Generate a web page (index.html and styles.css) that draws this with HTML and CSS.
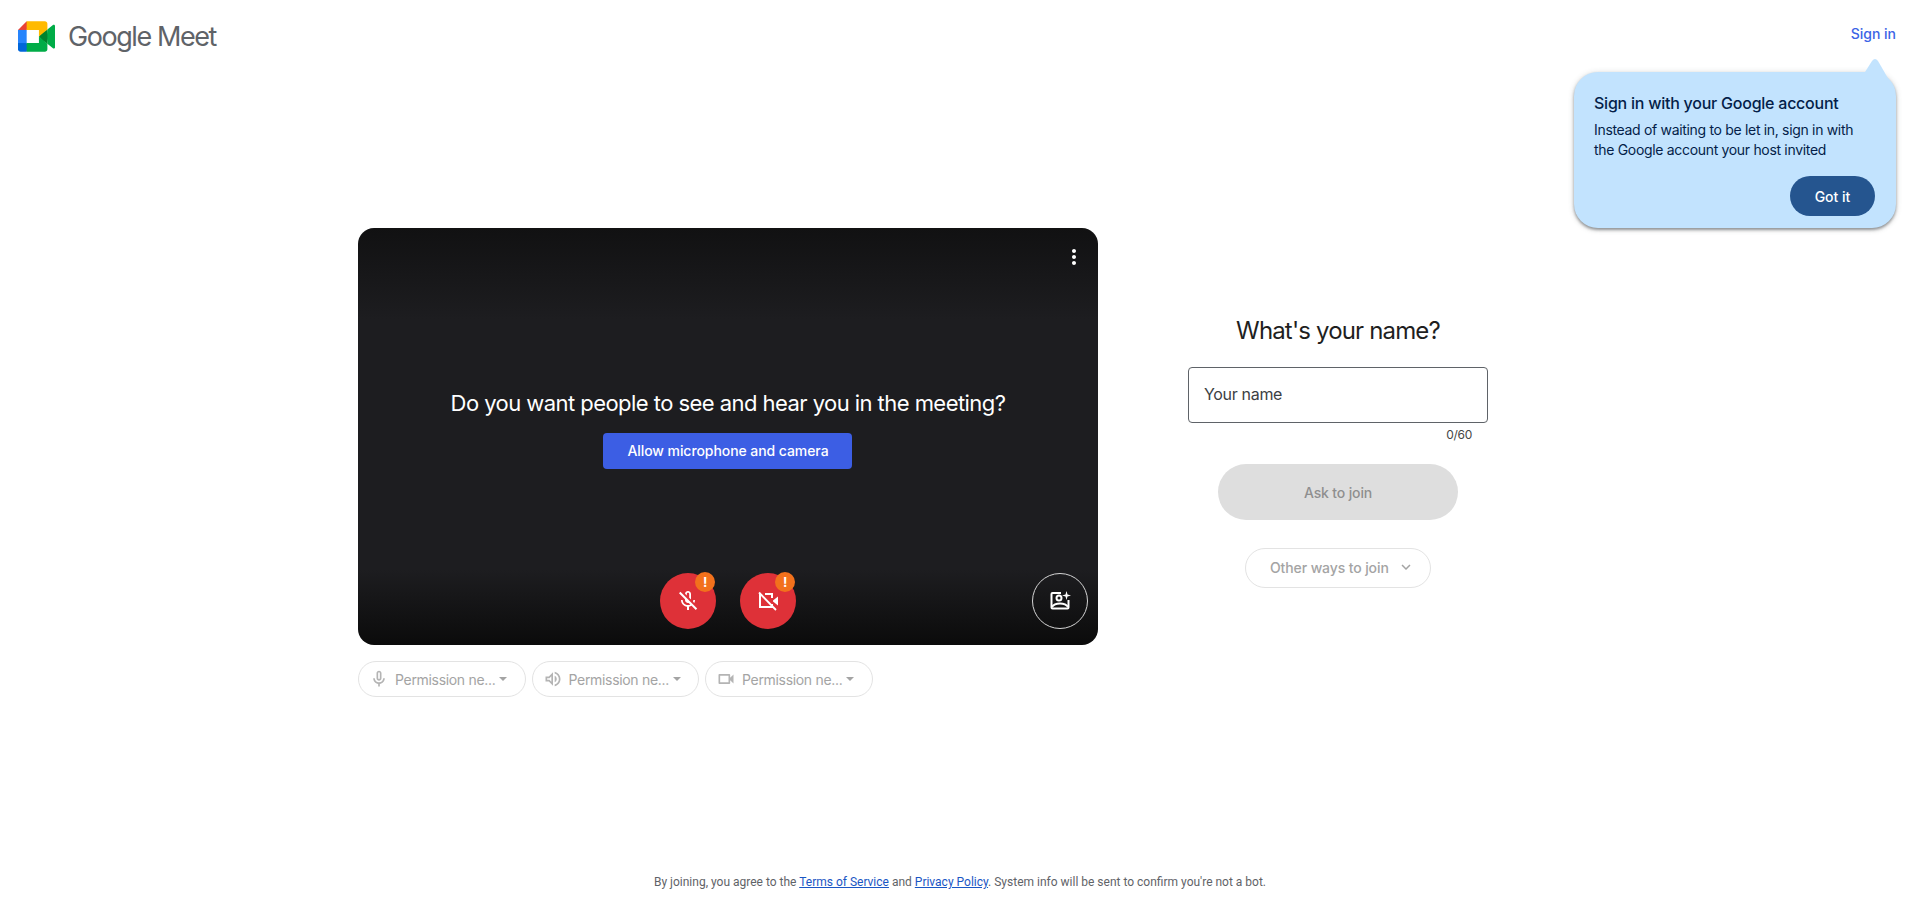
FILE: index.html
```html
<!DOCTYPE html>
<html lang="en">
<head>
    <meta charset="UTF-8">
    <meta name="viewport" content="width=device-width, initial-scale=1.0">
    <title>Google Meet</title>
    <link rel="stylesheet" href="styles.css">
</head>
<body>

    <header class="topbar">
        <div class="brand">
            <svg class="brand-logo" viewBox="0 0 87.5 72">
                <path fill="#00832d" d="M49.5 36l8.53 9.75 11.47 7.33 2-17.02-2-16.64-11.69 6.44z"/>
                <path fill="#0066da" d="M0 51.5V66c0 3.315 2.685 6 6 6h14.5l3-10.96-3-9.54-9.95-3z"/>
                <path fill="#e94235" d="M20.5 0L0 20.5l10.55 3 9.95-3 2.95-9.41z"/>
                <path fill="#2684fc" d="M20.5 20.5H0v31h20.5z"/>
                <path fill="#00ac47" d="M82.6 8.68L69.5 19.42v33.66l13.16 10.79c1.97 1.54 4.85.135 4.85-2.37V11c0-2.535-2.945-3.925-4.91-2.32zM49.5 36v15.5h-29V72h43c3.315 0 6-2.685 6-6V53.08z"/>
                <path fill="#ffba00" d="M63.5 0h-43v20.5h29V36l20-16.57V6c0-3.315-2.685-6-6-6z"/>
            </svg>
            <span class="brand-name">Google Meet</span>
        </div>
        <a class="signin-link" href="#">Sign in</a>
    </header>

    <!-- callout under the sign in link -->
    <div class="callout">
        <h2 class="callout-title">Sign in with your Google account</h2>
        <p class="callout-text">Instead of waiting to be let in, sign in with the Google account your host invited</p>
        <div class="callout-actions">
            <button class="callout-btn">Got it</button>
        </div>
    </div>

    <main class="content">
        <section class="preview-col">
            <div class="preview">
                <button class="more-btn" aria-label="More options">
                    <svg viewBox="0 0 24 24" width="24" height="24"><path fill="#fff" d="M12 8c1.1 0 2-.9 2-2s-.9-2-2-2-2 .9-2 2 .9 2 2 2zm0 2c-1.1 0-2 .9-2 2s.9 2 2 2 2-.9 2-2-.9-2-2-2zm0 6c-1.1 0-2 .9-2 2s.9 2 2 2 2-.9 2-2-.9-2-2-2z"/></svg>
                </button>

                <div class="prompt">
                    <p class="prompt-text">Do you want people to see and hear you in the meeting?</p>
                    <button class="prompt-btn">Allow microphone and camera</button>
                </div>

                <div class="controls">
                    <button class="round-btn" aria-label="Microphone">
                        <svg viewBox="0 0 24 24" width="24" height="24"><path fill="#fff" d="M10.8 4.9c0-.66.54-1.2 1.2-1.2s1.2.54 1.2 1.2l-.01 3.91L15 10.6V5c0-1.66-1.34-3-3-3-1.54 0-2.79 1.16-2.96 2.65l1.76 1.76V4.9zM19 11h-1.7c0 .58-.1 1.13-.27 1.64l1.27 1.27c.44-.88.7-1.87.7-2.91zM4.41 2.86L3 4.27l6 6V11c0 1.66 1.34 3 3 3 .23 0 .44-.03.65-.08l1.66 1.66c-.71.33-1.5.52-2.31.52-2.76 0-5.3-2.1-5.3-5.1H5c0 3.41 2.72 6.23 6 6.72V21h2v-3.28c.91-.13 1.77-.45 2.55-.9l4.2 4.2 1.41-1.41L4.41 2.86z"/></svg>
                        <span class="warn-badge">!</span>
                    </button>
                    <button class="round-btn" aria-label="Camera">
                        <svg viewBox="0 0 24 24" width="24" height="24" fill="none" stroke="#fff" stroke-width="2">
                            <path d="M9 5h7v4M16 15v3H4V5h1"/>
                            <path d="M3 3.500l17 17.500" stroke-width="1.800"/>
                            <path fill="#fff" stroke="none" d="M17 11.500l5-4v9l-5-4z"/>
                        </svg>
                        <span class="warn-badge">!</span>
                    </button>
                </div>

                <button class="effects-btn" aria-label="Apply visual effects">
                    <svg viewBox="0 0 24 24" width="24" height="24" fill="none" stroke="#fff" stroke-width="2">
                        <path d="M13 4H4.500a1 1 0 0 0-1 1v13.500a1 1 0 0 0 1 1h15a1 1 0 0 0 1-1V11"/>
                        <circle cx="11" cy="9" r="2.500"/>
                        <path d="M4 18c1.500-2.500 4.500-3.500 8-3.500s6.500 1 8 3.500"/>
                        <path fill="#fff" stroke="none" d="M18.500 2l1 3.500 3.500 1-3.500 1-1 3.500-1-3.500-3.500-1 3.500-1z"/>
                    </svg>
                </button>
            </div>

            <div class="device-row">
                <button class="device-chip">
                    <svg viewBox="0 0 24 24" width="20" height="20"><path d="M12 14c1.66 0 3-1.34 3-3V5c0-1.66-1.34-3-3-3S9 3.34 9 5v6c0 1.66 1.34 3 3 3zm-1-9c0-.55.45-1 1-1s1 .45 1 1v6c0 .55-.45 1-1 1s-1-.45-1-1V5zm6 6c0 2.76-2.24 5-5 5s-5-2.24-5-5H5c0 3.53 2.61 6.43 6 6.92V21h2v-3.08c3.39-.49 6-3.39 6-6.92h-2z"/></svg>
                    <span class="chip-label">Permission ne...</span>
                    <span class="chip-arrow"></span>
                </button>
                <button class="device-chip">
                    <svg viewBox="0 0 24 24" width="20" height="20"><path d="M3 9v6h4l5 5V4L7 9H3zm7-.17v6.34L7.83 13H5v-2h2.83L10 8.83zM16.5 12c0-1.77-1.02-3.29-2.5-4.03v8.05c1.48-.73 2.5-2.25 2.5-4.02zM14 3.23v2.06c2.89.86 5 3.54 5 6.71s-2.11 5.85-5 6.71v2.06c4.01-.91 7-4.49 7-8.77 0-4.28-2.99-7.86-7-8.77z"/></svg>
                    <span class="chip-label">Permission ne...</span>
                    <span class="chip-arrow"></span>
                </button>
                <button class="device-chip">
                    <svg viewBox="0 0 24 24" width="20" height="20"><path d="M15 8v8H5V8h10m1-2H4c-.55 0-1 .45-1 1v10c0 .55.45 1 1 1h12c.55 0 1-.45 1-1v-3.500l4 4v-11l-4 4V7c0-.55-.45-1-1-1z"/></svg>
                    <span class="chip-label">Permission ne...</span>
                    <span class="chip-arrow"></span>
                </button>
            </div>
        </section>

        <section class="join-col">
            <h1 class="join-title">What's your name?</h1>
            <div class="name-field">
                <input class="name-input" type="text" placeholder="Your name">
            </div>
            <div class="name-count">0/60</div>
            <button class="ask-btn">Ask to join</button>
            <button class="other-btn">
                Other ways to join
                <svg viewBox="0 0 24 24" width="18" height="18"><path d="M7.41 8.59 12 13.17l4.59-4.58L18 10l-6 6-6-6z"/></svg>
            </button>
        </section>
    </main>

    <footer class="legal">
        By joining, you agree to the <a href="#">Terms of Service</a> and <a href="#">Privacy Policy</a>. System info will be sent to confirm you're not a bot.
    </footer>

</body>
</html>
```

FILE: styles.css
```css
* {
    box-sizing: border-box;
}

body {
    margin: 0;
    height: 100vh;
    display: flex;
    flex-direction: column;
    background: #fff;
    color: #1f1f1f;
    font-family: Inter, sans-serif;
    letter-spacing: -0.02em;
    overflow: hidden;
}

button {
    font-family: inherit;
    letter-spacing: inherit;
    cursor: pointer;
}

/* top bar */
.topbar {
    display: flex;
    justify-content: space-between;
    align-items: flex-start;
    height: 72px;
    padding: 21px 24px 0 18px;
}

.brand {
    display: flex;
    align-items: center;
    gap: 13px;
    height: 31px;
}

.brand-logo {
    width: 37px;
    height: 31px;
}

.brand-name {
    font-size: 27px;
    line-height: 31px;
    color: #5f6368;
    letter-spacing: -0.053em;
}

.signin-link {
    margin-top: 4px;
    font-size: 14px;
    font-weight: 500;
    letter-spacing: 0;
    color: #3c64e6;
    text-decoration: none;
}

/* callout */
.callout {
    position: absolute;
    top: 72px;
    left: 1574px;
    width: 322px;
    height: 156px;
    padding: 19px 21px 13px 20px;
    background: #c2e3fe;
    border-radius: 24px;
    box-shadow: 0 2px 3px rgba(60, 64, 67, 0.5), 0 1px 6px rgba(60, 64, 67, 0.2);
}

.callout::before {
    content: "";
    position: absolute;
    top: -14px;
    left: 289px;
    width: 26px;
    height: 24px;
    background: #c2e3fe;
    clip-path: path("M2 14 L9 3 Q12 -1 15 3 L26 22 L26 24 L2 24 Z");
}

.callout-title {
    margin: 0 0 5px;
    font-size: 16px;
    line-height: 24px;
    font-weight: 500;
    letter-spacing: -0.015em;
    color: #041e49;
}

.callout-text {
    margin: 0;
    font-size: 14px;
    line-height: 20px;
    color: #041e49;
}

.callout-actions {
    display: flex;
    justify-content: flex-end;
    margin-top: 16px;
}

.callout-btn {
    width: 85px;
    height: 40px;
    border: 0;
    border-radius: 20px;
    background: #25558f;
    color: #fff;
    font-size: 14px;
    font-weight: 500;
    letter-spacing: 0;
}

/* main area */
.content {
    display: flex;
    justify-content: center;
    gap: 16px;
    padding-top: 156px;
    flex: 1;
}

.preview-col {
    width: 740px;
}

.preview {
    position: relative;
    width: 740px;
    height: 417px;
    border-radius: 16px;
    background: linear-gradient(#111112 0, #1d1d20 22%, #1d1d20 82%, #0b0b0b 100%);
    display: flex;
    align-items: center;
    justify-content: center;
}

.more-btn {
    position: absolute;
    top: 17px;
    right: 12px;
    width: 24px;
    height: 24px;
    padding: 0;
    border: 0;
    background: none;
}

.prompt {
    display: flex;
    flex-direction: column;
    align-items: center;
    gap: 14px;
    padding-bottom: 18px;
}

.prompt-text {
    margin: 0;
    font-size: 22px;
    line-height: 32px;
    letter-spacing: -0.025em;
    color: #fff;
}

.prompt-btn {
    width: 249px;
    height: 36px;
    border: 0;
    border-radius: 4px;
    background: #3c5ee4;
    color: #fff;
    font-size: 14px;
    font-weight: 500;
    letter-spacing: -0.005em;
}

.controls {
    position: absolute;
    bottom: 16px;
    left: 302px;
    display: flex;
    gap: 24px;
}

.round-btn {
    position: relative;
    display: flex;
    align-items: center;
    justify-content: center;
    width: 56px;
    height: 56px;
    padding: 0;
    border: 0;
    border-radius: 50%;
    background: #de3138;
}

.warn-badge {
    position: absolute;
    top: -1px;
    right: 1px;
    width: 20px;
    height: 20px;
    border-radius: 50%;
    background: #f2711c;
    color: #fff;
    font-size: 13px;
    line-height: 20px;
    font-weight: 700;
    text-align: center;
}

.effects-btn {
    position: absolute;
    bottom: 16px;
    right: 10px;
    display: flex;
    align-items: center;
    justify-content: center;
    width: 56px;
    height: 56px;
    padding: 0;
    border: 1px solid #d4d4d4;
    border-radius: 50%;
    background: none;
}

/* device chips under the preview */
.device-row {
    display: flex;
    gap: 6px;
    margin-top: 16px;
}

.device-chip {
    display: flex;
    align-items: center;
    width: 167.5px;
    height: 36px;
    padding: 0 8px 0 10px;
    border: 1px solid #e3e3e3;
    border-radius: 18px;
    background: #fff;
    color: #a4a4a4;
}

.device-chip svg {
    flex: none;
    fill: #b4b4b4;
}

.chip-label {
    margin-left: 6px;
    font-size: 14px;
    white-space: nowrap;
}

.chip-arrow {
    margin-left: 4px;
    border-left: 4px solid transparent;
    border-right: 4px solid transparent;
    border-top: 4px solid #a4a4a4;
}

/* join column */
.join-col {
    width: 448px;
    display: flex;
    flex-direction: column;
    align-items: center;
    padding-top: 87px;
}

.join-title {
    margin: 0 0 20px;
    font-size: 24px;
    line-height: 32px;
    font-weight: 400;
    letter-spacing: -0.035em;
    color: #1f1f1f;
}

.name-field {
    width: 300px;
    height: 56px;
}

.name-input {
    width: 100%;
    height: 100%;
    padding: 0 15px 2px;
    border: 1px solid #5f6368;
    border-radius: 4px;
    font-family: inherit;
    font-size: 16px;
    letter-spacing: inherit;
    outline: none;
}

.name-input::placeholder {
    color: #3c4043;
    opacity: 1;
}

.name-count {
    width: 300px;
    padding: 3px 16px 0 0;
    font-size: 12px;
    line-height: 18px;
    text-align: right;
    color: #444746;
}

.ask-btn {
    width: 240px;
    height: 56px;
    margin-top: 20px;
    padding-bottom: 1px;
    border: 0;
    border-radius: 28px;
    background: #dedede;
    color: #8f8f8f;
    font-size: 14px;
    font-weight: 500;
    letter-spacing: -0.01em;
}

.other-btn {
    display: flex;
    align-items: center;
    gap: 8px;
    width: 186px;
    height: 40px;
    margin-top: 28px;
    padding: 0 14px 2px 24px;
    border: 1px solid #e3e3e3;
    border-radius: 20px;
    background: #fff;
    color: #a4a4a4;
    font-size: 14px;
    font-weight: 500;
    letter-spacing: -0.008em;
    white-space: nowrap;
}

.other-btn svg {
    flex: none;
    fill: #a4a4a4;
}

/* footer */
.legal {
    padding-bottom: 8px;
    font-family: Roboto, sans-serif;
    letter-spacing: 0;
    font-size: 12px;
    line-height: 14px;
    text-align: center;
    color: #5f6368;
}

.legal a {
    color: #1a56c4;
}
```
